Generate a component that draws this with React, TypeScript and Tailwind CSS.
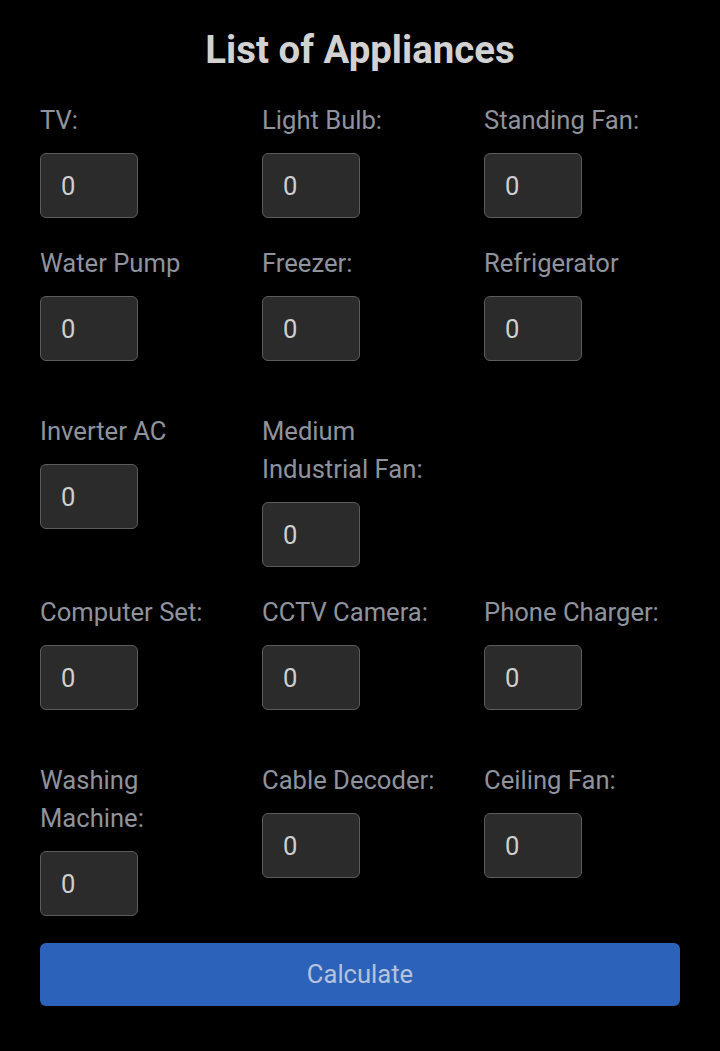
import React from "react";

type Field = { key: string; label: string };

const rows: { mt: string; fields: (Field | null)[] }[] = [
  {
    mt: "mt-[28px]",
    fields: [
      { key: "tv", label: "TV:" },
      { key: "lightBulb", label: "Light Bulb:" },
      { key: "standingFan", label: "Standing Fan:" },
    ],
  },
  {
    mt: "mt-[26px]",
    fields: [
      { key: "waterPump", label: "Water Pump" },
      { key: "freezer", label: "Freezer:" },
      { key: "refrigerator", label: "Refrigerator" },
    ],
  },
  {
    mt: "mt-[51px]",
    fields: [
      { key: "inverterAc", label: "Inverter AC" },
      { key: "industrialFan", label: "Medium Industrial Fan:" },
      null,
    ],
  },
  {
    mt: "mt-[26px]",
    fields: [
      { key: "computer", label: "Computer Set:" },
      { key: "cctv", label: "CCTV Camera:" },
      { key: "charger", label: "Phone Charger:" },
    ],
  },
  {
    mt: "mt-[51px]",
    fields: [
      { key: "washingMachine", label: "Washing Machine:" },
      { key: "decoder", label: "Cable Decoder:" },
      { key: "ceilingFan", label: "Ceiling Fan:" },
    ],
  },
];

const App: React.FC = () => {
  const [values, setValues] = React.useState<Record<string, string>>({});

  const handleChange = (e: React.ChangeEvent<HTMLInputElement>) => {
    const { name, value } = e.target;
    setValues((prev) => ({ ...prev, [name]: value }));
  };

  return (
    <div className="min-h-[1051px] bg-black px-[40px] pt-[27px] font-['Roboto',sans-serif]">
      <h1 className="text-center text-[38.4px] leading-[46px] font-bold text-[#d2d2d2]">
        List of Appliances
      </h1>

      {rows.map((row, i) => (
        <div key={i} className={`${row.mt} grid grid-cols-3 gap-x-[26px] items-start`}>
          {row.fields.map((f, j) =>
            f ? (
              <div key={f.key}>
                <label className="block text-[25.6px] leading-[38px] text-[#8e939d] pr-[10px]">
                  {f.label}
                </label>
                <input
                  type="text"
                  name={f.key}
                  value={values[f.key] ?? "0"}
                  onChange={handleChange}
                  className="mt-[14px] block h-[65px] w-[98px] rounded-[6px] border border-[#5c5c5c] bg-[#2b2b2b] pl-[20px] text-[25.6px] text-[#cfcfcf] outline-none"
                />
              </div>
            ) : (
              <div key={j} />
            )
          )}
        </div>
      ))}

      <button
        type="button"
        className="mt-[27px] block h-[63px] w-full rounded-[6px] bg-[#2d62ba] text-[25.6px] text-[#b5c3db]"
      >
        Calculate
      </button>
    </div>
  );
};

export default App;
